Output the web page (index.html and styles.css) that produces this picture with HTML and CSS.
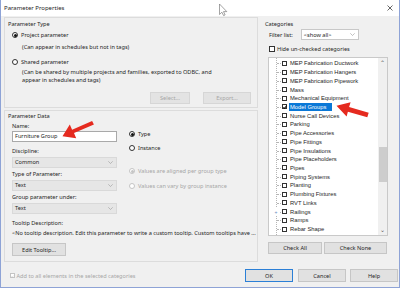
FILE: index.html
```html
<!DOCTYPE html>
<html lang="en">

<head>
    <meta charset="UTF-8">
    <title>Parameter Properties</title>
    <link rel="stylesheet" href="styles.css">
</head>

<body>
    <div class="window">
        <div class="titlebar">
            <span class="title">Parameter Properties</span>
            <svg class="close" width="6" height="6" viewBox="0 0 6 6"><path d="M0.5 0.5 L5.5 5.5 M5.5 0.5 L0.5 5.5" stroke="#222" stroke-width="0.7"/></svg>
        </div>

        <div class="main">
            <div class="left">
                <!-- Parameter Type -->
                <div class="group type-group">
                    <div class="group-title">Parameter Type</div>
                    <div class="radio-row first"><span class="radio on"></span>Project parameter</div>
                    <div class="note">(Can appear in schedules but not in tags)</div>
                    <div class="radio-row shared"><span class="radio"></span>Shared parameter</div>
                    <div class="note two">(Can be shared by multiple projects and families, exported to ODBC, and<br>appear in schedules and tags)</div>
                    <div class="btn-row">
                        <button class="btn disabled select-btn">Select...</button>
                        <button class="btn disabled export-btn">Export...</button>
                    </div>
                </div>

                <!-- Parameter Data -->
                <div class="group data-group">
                    <div class="group-title">Parameter Data</div>
                    <div class="data-body">
                        <div class="fields">
                            <div class="label first">Name:</div>
                            <div class="input">Furniture Group</div>
                            <div class="label gap">Discipline:</div>
                            <div class="combo">Common<svg class="chev" width="5" height="3" viewBox="0 0 5 3"><path d="M0.3 0.3 L2.5 2.5 L4.7 0.3" fill="none" stroke="#999" stroke-width="0.6"/></svg></div>
                            <div class="label">Type of Parameter:</div>
                            <div class="combo">Text<svg class="chev" width="5" height="3" viewBox="0 0 5 3"><path d="M0.3 0.3 L2.5 2.5 L4.7 0.3" fill="none" stroke="#999" stroke-width="0.6"/></svg></div>
                            <div class="label">Group parameter under:</div>
                            <div class="combo">Text<svg class="chev" width="5" height="3" viewBox="0 0 5 3"><path d="M0.3 0.3 L2.5 2.5 L4.7 0.3" fill="none" stroke="#999" stroke-width="0.6"/></svg></div>
                        </div>
                        <div class="kind">
                            <div class="radio-row type-row"><span class="radio on"></span>Type</div>
                            <div class="radio-row inst-row"><span class="radio"></span>Instance</div>
                            <div class="radio-row off values-a"><span class="radio on"></span>Values are aligned per group type</div>
                            <div class="radio-row off values-b"><span class="radio"></span>Values can vary by group instance</div>
                        </div>
                    </div>
                    <div class="label tip-label">Tooltip Description:</div>
                    <div class="tip-text">&lt;No tooltip description. Edit this parameter to write a custom tooltip. Custom tooltips have ...</div>
                    <button class="btn edit-btn">Edit Tooltip...</button>
                </div>
            </div>

            <!-- Categories -->
            <div class="right">
                <div class="cat-title">Categories</div>
                <div class="filter-row">
                    <span>Filter list:</span>
                    <div class="filter-combo">&lt;show all&gt;<svg class="chev" width="5" height="3" viewBox="0 0 5 3"><path d="M0.3 0.3 L2.5 2.5 L4.7 0.3" fill="none" stroke="#999" stroke-width="0.6"/></svg></div>
                </div>
                <div class="hide-row"><span class="check"></span>Hide un-checked categories</div>
                <div class="listbox">
                    <div class="rows" id="cat-list"></div>
                    <div class="scrollbar">
                        <div class="sb-arrow">&#8963;</div>
                        <div class="sb-track"><div class="sb-thumb"></div></div>
                        <div class="sb-arrow">&#8964;</div>
                    </div>
                </div>
                <div class="check-btns">
                    <button class="btn check-all">Check All</button>
                    <button class="btn check-none">Check None</button>
                </div>
            </div>
        </div>

        <div class="footer">
            <div class="add-all"><span class="check off-check"><svg width="5" height="5" viewBox="0 0 5 5"><path d="M0.8 2.5 L2 3.8 L4.2 1" fill="none" stroke="#bbb" stroke-width="0.8"/></svg></span>Add to all elements in the selected categories</div>
            <div class="dlg-btns">
                <button class="btn ok-btn">OK</button>
                <button class="btn cancel-btn">Cancel</button>
                <button class="btn help-btn">Help</button>
            </div>
        </div>

        <!-- annotations drawn over the dialog -->
        <svg class="overlay" width="400" height="288" viewBox="0 0 400 288">
            <polygon fill="#e52a1f" points="92.1,120.9 72.1,129.8 69.8,124.6 62.5,136.2 76.2,138.2 74.0,133.0 93.9,124.5"/>
            <polygon fill="#e52a1f" points="368.7,112.7 349.1,107.0 350.6,102.3 336.5,105.8 346.6,116.5 347.9,111.7 367.3,117.3"/>
            <path d="M219.5 4 L219.5 14.5 L221.9 12.2 L223.6 15.6 L225.1 14.9 L223.5 11.6 L226.8 11.6 Z" fill="#fff" stroke="#666" stroke-width="0.6"/>
        </svg>
    </div>

    <script>
        const categories = [
            "MEP Fabrication Ductwork", "MEP Fabrication Hangers", "MEP Fabrication Pipework",
            "Mass", "Mechanical Equipment", "Model Groups", "Nurse Call Devices", "Parking",
            "Pipe Accessories", "Pipe Fittings", "Pipe Insulations", "Pipe Placeholders", "Pipes",
            "Piping Systems", "Planting", "Plumbing Fixtures", "RVT Links", "Railings", "Ramps",
            "Rebar Shape", ""
        ];

        const list = document.getElementById("cat-list");
        categories.forEach(name => {
            const row = document.createElement("div");
            row.className = "cat-row";
            const selected = name === "Model Groups";
            const plus = name === "Railings" ? '<span class="plus">+</span>' : '';
            row.innerHTML = `${plus}<span class="check${selected ? ' checked' : ''}"></span><span class="cat-name${selected ? ' selected' : ''}">${name}</span>`;
            list.appendChild(row);
        });
    </script>
</body>

</html>
```

FILE: styles.css
```css
* {
    box-sizing: border-box;
}

body {
    margin: 0;
    font-family: 'Noto Sans', 'DejaVu Sans', sans-serif;
    font-size: 5.6px;
    line-height: 8px;
    color: #1e1e1e;
}

.window {
    position: relative;
    width: 400px;
    height: 288px;
    background-color: #f0f0f0;
    border: 1px solid #8ea3d6;
    border-top: none;
    overflow: hidden;
}

/* Title bar */
.titlebar {
    height: 16px;
    background-color: #fff;
    display: flex;
    align-items: center;
    justify-content: space-between;
    padding: 0 6px 0 3px;
    font-size: 6px;
}

/* Main area */
.main {
    display: flex;
    align-items: flex-start;
    padding: 1px 0 0 3px;
}

.left {
    width: 254px;
}

.group {
    border: 1px solid #dcdcdc;
    padding: 0 3px;
}

.type-group {
    height: 91px;
}

.group-title {
    margin-top: 2px;
}

.radio-row {
    display: flex;
    align-items: center;
    height: 8px;
}

.radio {
    width: 6px;
    height: 6px;
    border: 0.8px solid #333;
    border-radius: 50%;
    background-color: #fff;
    margin-right: 3px;
    display: flex;
    align-items: center;
    justify-content: center;
    flex-shrink: 0;
}

.radio.on::after {
    content: "";
    width: 3px;
    height: 3px;
    border-radius: 50%;
    background-color: #111;
}

.type-group .radio-row {
    padding-left: 4px;
}

.radio-row.first {
    margin-top: 3px;
}

.radio-row.shared {
    margin-top: 7px;
}

.note {
    margin: 4px 0 0 14px;
}

.note.two {
    margin-top: 2px;
}

.btn {
    font-family: inherit;
    font-size: 5.6px;
    color: #1e1e1e;
    background-color: #e1e1e1;
    border: 1px solid #c6c6c6;
    padding: 0;
    height: 12px;
    line-height: 10px;
}

.btn.disabled {
    color: #a6a6a6;
    background-color: #e3e3e3;
    border-color: #d6d6d6;
}

.btn-row {
    display: flex;
    justify-content: flex-end;
    gap: 13px;
    margin: 8px 3px 0 0;
}

.select-btn {
    width: 40px;
}

.export-btn {
    width: 48px;
}

/* Parameter Data */
.data-group {
    margin-top: 2px;
    height: 152px;
}

.data-group .group-title {
    margin-top: 1px;
}

.data-body {
    display: flex;
    padding-left: 4px;
}

.fields {
    width: 105px;
}

.label.first {
    margin-top: 2px;
}

.label {
    margin-top: 2px;
}

.label.gap {
    margin-top: 5px;
}

.input,
.combo {
    height: 11px;
    line-height: 9px;
    margin-top: 1px;
    padding-left: 2px;
    border: 1px solid #a9a9a9;
    background-color: #fff;
    position: relative;
}

.combo {
    margin-top: 2px;
    background-color: #e6e6e6;
    border-color: #d9d9d9;
    display: flex;
    align-items: center;
    justify-content: space-between;
    padding-right: 3px;
    line-height: 9px;
}

.kind {
    margin-left: 12px;
}

.type-row {
    margin-top: 10px;
}

.inst-row {
    margin-top: 6px;
}

.values-a {
    margin-top: 15px;
}

.values-b {
    margin-top: 7px;
}

.radio-row.off {
    color: #a6a6a6;
}

.radio-row.off .radio {
    border-color: #c4c4c4;
}

.radio-row.off .radio.on::after {
    background-color: #c4c4c4;
}

.tip-label {
    margin: 5px 0 0 4px;
}

.tip-text {
    margin: 2px 0 0 4px;
    white-space: nowrap;
}

.edit-btn {
    display: block;
    margin: 6px 0 0 4px;
    width: 54px;
    height: 13px;
}

/* Categories */
.right {
    margin-left: 7px;
    width: 132px;
}

.cat-title {
    margin-top: 3px;
}

.filter-row {
    display: flex;
    align-items: center;
    height: 11px;
    margin-top: 1px;
    padding-left: 4px;
}

.filter-combo {
    width: 58px;
    height: 11px;
    margin-left: 8px;
    border: 1px solid #c8c8c8;
    background-color: #fff;
    display: flex;
    align-items: center;
    justify-content: space-between;
    padding: 0 3px 0 2px;
}

.hide-row {
    display: flex;
    align-items: center;
    height: 8px;
    margin-top: 5px;
    padding-left: 4px;
}

.hide-row .check {
    width: 6px;
    height: 6px;
    margin-right: 2px;
}

.check {
    width: 5px;
    height: 5px;
    border: 0.8px solid #333;
    background-color: #fff;
    flex-shrink: 0;
    position: relative;
}

.check.checked::after {
    content: "";
    position: absolute;
    left: 1.2px;
    top: -0.2px;
    width: 1.4px;
    height: 3px;
    border: solid #111;
    border-width: 0 0.8px 0.8px 0;
    transform: rotate(40deg);
}

.listbox {
    display: flex;
    margin: 4px 0 0 3px;
    width: 120px;
    height: 179px;
    border: 1px solid #c9c9c9;
    background-color: #fff;
}

.rows {
    flex: 1;
    overflow: hidden;
    padding-top: 1px;
    position: relative;
    font-family: 'Liberation Sans', Arial, sans-serif;
    font-size: 5.8px;
}

.rows::before {
    content: "";
    position: absolute;
    left: 7px;
    top: 0;
    bottom: 0;
    border-left: 0.6px dotted #b5b5b5;
}

.cat-row {
    position: relative;
    display: flex;
    align-items: center;
    height: 8.72px;
    padding-left: 13px;
}

.cat-row::before {
    content: "";
    position: absolute;
    left: 8px;
    width: 4px;
    top: 50%;
    border-top: 0.6px dotted #b5b5b5;
}

.cat-name {
    margin-left: 2px;
    padding: 0 1px;
    line-height: 8px;
}

.cat-name.selected {
    background-color: #0a78d7;
    color: #fff;
    padding-right: 6px;
}

.plus {
    position: absolute;
    left: 4px;
    width: 6px;
    text-align: center;
    font-size: 5px;
    color: #6a8ac0;
    background-color: #fff;
    z-index: 1;
}

.scrollbar {
    width: 9px;
    background-color: #f0f0f0;
    display: flex;
    flex-direction: column;
}

.sb-arrow {
    height: 10px;
    text-align: center;
    font-size: 6px;
    line-height: 10px;
    color: #555;
}

.sb-track {
    flex: 1;
}

.sb-thumb {
    margin: 79px auto 0;
    width: 8px;
    height: 35px;
    background-color: #cdcdcd;
}

.check-btns {
    display: flex;
    gap: 2px;
    margin: 6px 0 0 3px;
}

.check-all {
    width: 54px;
}

.check-none {
    width: 63px;
}

/* Footer */
.footer {
    display: flex;
    align-items: center;
    justify-content: space-between;
    margin-top: 7px;
    height: 13px;
    padding: 0 1px 0 9px;
}

.add-all {
    display: flex;
    align-items: center;
    color: #a6a6a6;
}

.check.off-check {
    border-color: #c4c4c4;
    margin-right: 1.5px;
    display: flex;
}

.dlg-btns {
    display: flex;
    gap: 4px;
}

.dlg-btns .btn {
    width: 48px;
    height: 13px;
}

.ok-btn {
    border-color: #2b7fd6;
    margin-right: 1px;
}

.overlay {
    position: absolute;
    left: -1px;
    top: 0;
    pointer-events: none;
}
```
